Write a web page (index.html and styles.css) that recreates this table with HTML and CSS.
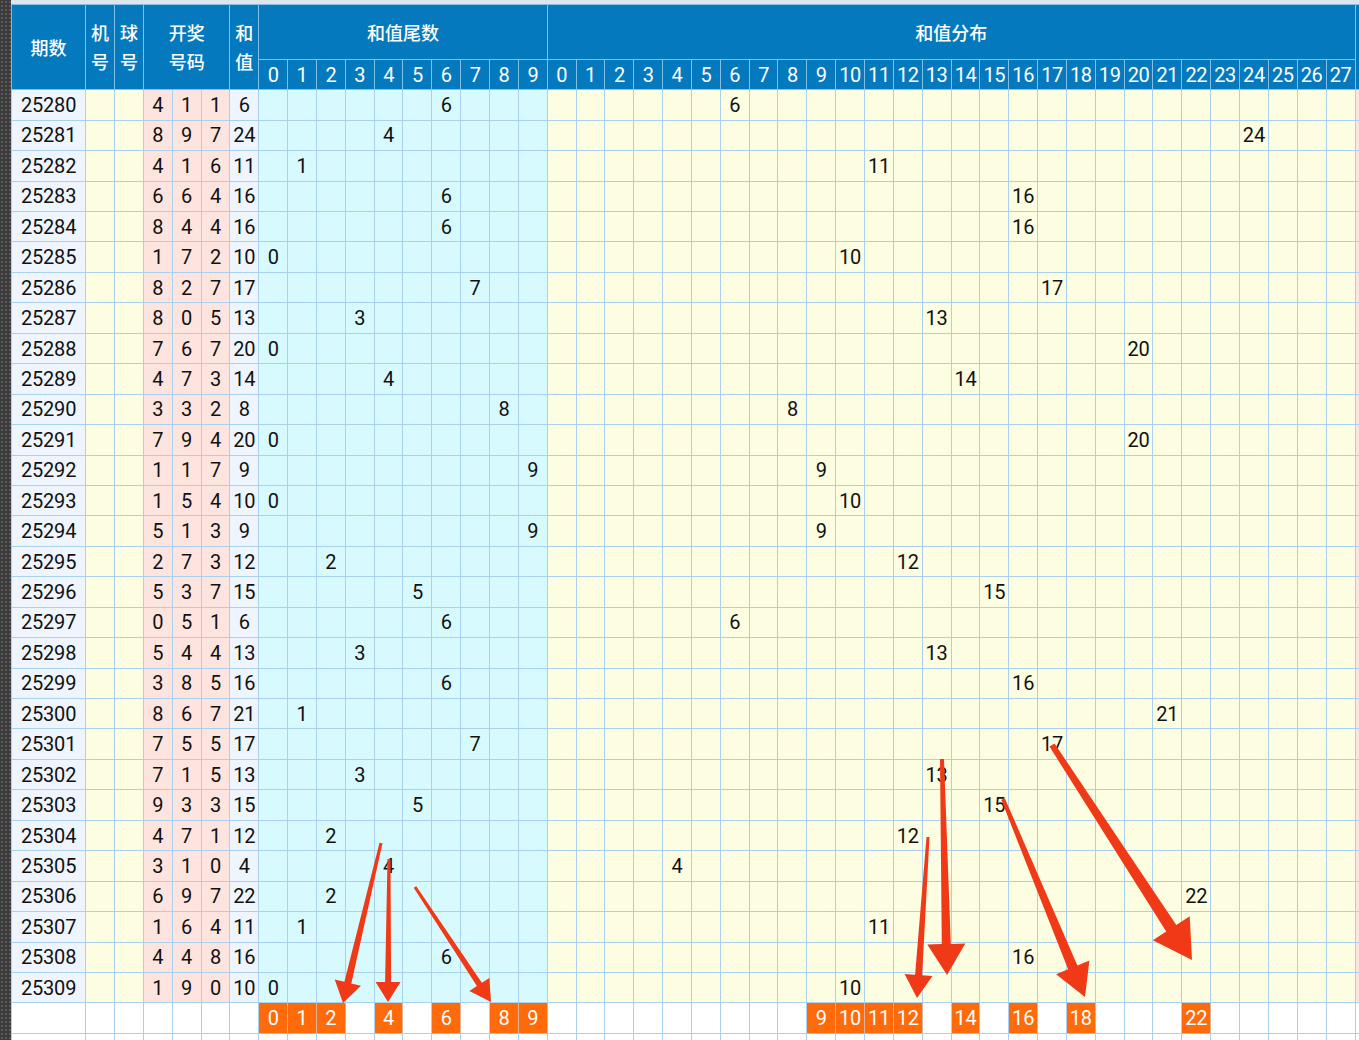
FILE: index.html
```html
<!DOCTYPE html>
<html lang="zh-CN">
<head>
<meta charset="utf-8">
<title>和值走势</title>
<link rel="stylesheet" href="styles.css">
</head>
<body>
<div class="page">
  <div class="rail"></div>
  <div class="sheet">
    <table class="chart">
      <colgroup id="cols"></colgroup>
      <thead>
        <tr class="h1">
          <th rowspan="2" class="cn">期数</th>
          <th rowspan="2" class="cn two">机<br>号</th>
          <th rowspan="2" class="cn two">球<br>号</th>
          <th rowspan="2" colspan="3" class="cn two">开奖<br>号码</th>
          <th rowspan="2" class="cn two">和<br>值</th>
          <th colspan="10" class="cn">和值尾数</th>
          <th colspan="28" class="cn">和值分布</th>
          <th rowspan="2"></th>
        </tr>
        <tr class="h2" id="subhead"></tr>
      </thead>
      <tbody id="rows"></tbody>
    </table>
  </div>
  <svg class="arrows" id="arrows" width="1359" height="1040" viewBox="0 0 1359 1040"></svg>
</div>
<script src="script.js"></script>
</body>
</html>
```
FILE: styles.css
```css
html, body {
  margin: 0;
  padding: 0;
}
body {
  background: #dde6ec;
  overflow: hidden;
  width: 1359px;
  height: 1040px;
}
.page {
  position: relative;
  display: flex;
  width: 1359px;
  height: 1040px;
  overflow: hidden;
}
.rail {
  flex: 0 0 11px;
  background-color: #3b3b3b;
  background-image: radial-gradient(circle, #5a5a5a 0.8px, transparent 1.1px);
  background-size: 4px 4px;
}
.sheet {
  padding-top: 4px;
  flex: 0 0 auto;
}
.chart {
  border-collapse: collapse;
  table-layout: fixed;
  width: 1372.45px;
  font-family: Roboto, "Noto Sans", sans-serif;
  font-size: 20px;
  color: #111;
}
.chart col.wide { width: 74.2px; }
.chart col.narrow { width: 28.85px; }
.chart th {
  background: #0479bd;
  color: #fff;
  font-weight: 400;
  border: 1px solid #82c0e8;
  padding: 0;
  text-align: center;
  vertical-align: middle;
}
.chart th.cn {
  font-family: "Noto Sans CJK SC", "Noto Sans", sans-serif;
  font-size: 18px;
  font-weight: 500;
  line-height: 29px;
}
.chart tr.h1 { height: 55.3px; }
.chart tr.h2 { height: 30px; }
.chart tr.h2 th { font-size: 20px; letter-spacing: -0.4px; }
.chart td {
  border: 1px solid #a9d1ee;
  padding: 0;
  text-align: center;
  vertical-align: middle;
  white-space: nowrap;
  overflow: visible;
  letter-spacing: -0.2px;
}
.chart tbody tr { height: 30.45px; }
.chart td.qi { background: #eef5fe; }
.chart td.jh { background: #fdfde2; }
.chart td.kj { background: #fde4de; }
.chart td.hz { background: #eef5fe; }
.chart td.ws { background: #d7fafe; }
.chart td.fb { background: #fdfde1; }
.chart td.px { background: #fde4de; }
.chart tr.sum td { background: #fff; }
.chart tr.sum td.hit {
  background: #ff6a0a;
  color: #fff;
  border-color: #d9b59c;
}
.chart tr.blank td { background: #fff; }
.arrows {
  position: absolute;
  left: 0;
  top: 0;
  pointer-events: none;
}
.arrows polygon { fill: #f03a17; }
```
FILE: script.js
```js
(function () {
  var data = [
    [25280,4,1,1],[25281,8,9,7],[25282,4,1,6],[25283,6,6,4],[25284,8,4,4],
    [25285,1,7,2],[25286,8,2,7],[25287,8,0,5],[25288,7,6,7],[25289,4,7,3],
    [25290,3,3,2],[25291,7,9,4],[25292,1,1,7],[25293,1,5,4],[25294,5,1,3],
    [25295,2,7,3],[25296,5,3,7],[25297,0,5,1],[25298,5,4,4],[25299,3,8,5],
    [25300,8,6,7],[25301,7,5,5],[25302,7,1,5],[25303,9,3,3],[25304,4,7,1],
    [25305,3,1,0],[25306,6,9,7],[25307,1,6,4],[25308,4,4,8],[25309,1,9,0]
  ];
  var tailHits = [0, 1, 2, 4, 6, 8, 9];
  var sumHits = [9, 10, 11, 12, 14, 16, 18, 22];

  var cols = document.getElementById('cols');
  var c = '<col class="wide">';
  for (var i = 0; i < 45; i++) c += '<col class="narrow">';
  cols.innerHTML = c;

  var sub = '';
  for (i = 0; i < 10; i++) sub += '<th>' + i + '</th>';
  for (i = 0; i < 28; i++) sub += '<th>' + i + '</th>';
  document.getElementById('subhead').innerHTML = sub;

  var html = '';
  data.forEach(function (r) {
    var s = r[1] + r[2] + r[3], t = s % 10;
    var row = '<tr><td class="qi">' + r[0] + '</td><td class="jh"></td><td class="jh"></td>' +
      '<td class="kj">' + r[1] + '</td><td class="kj">' + r[2] + '</td><td class="kj">' + r[3] + '</td>' +
      '<td class="hz">' + s + '</td>';
    for (var k = 0; k < 10; k++) row += '<td class="ws">' + (k === t ? k : '') + '</td>';
    for (k = 0; k < 28; k++) row += '<td class="fb">' + (k === s ? k : '') + '</td>';
    row += '<td class="px"></td></tr>';
    html += row;
  });
  var sumRow = '<tr class="sum"><td></td><td></td><td></td><td></td><td></td><td></td><td></td>';
  for (i = 0; i < 10; i++) sumRow += tailHits.indexOf(i) >= 0 ? '<td class="hit">' + i + '</td>' : '<td></td>';
  for (i = 0; i < 28; i++) sumRow += sumHits.indexOf(i) >= 0 ? '<td class="hit">' + i + '</td>' : '<td></td>';
  sumRow += '<td></td></tr>';
  var blank = '<tr class="blank">';
  for (i = 0; i < 46; i++) blank += '<td></td>';
  blank += '</tr>';
  document.getElementById('rows').innerHTML = html + sumRow + blank;

  // arrows: start, tip, shaft width at start, at head, head length, head width
  var arrows = [
    [381, 843, 343, 1003, 3, 7, 21, 27],
    [389, 859, 388, 1002, 3, 6, 20, 25],
    [415, 887, 491, 1002, 3, 6, 21, 24],
    [928, 837, 917, 998, 3, 7, 23, 28],
    [942, 759, 947, 975, 4, 9, 31, 38],
    [1003, 799, 1085, 997, 4, 10, 32, 36],
    [1052, 745, 1192, 960, 6, 12, 38, 44]
  ];
  var svg = document.getElementById('arrows');
  var out = '';
  arrows.forEach(function (a) {
    var sx = a[0], sy = a[1], tx = a[2], ty = a[3];
    var dx = tx - sx, dy = ty - sy, L = Math.sqrt(dx * dx + dy * dy);
    var ux = dx / L, uy = dy / L, nx = -uy, ny = ux;
    var bx = tx - ux * a[6], by = ty - uy * a[6];
    var p = [
      [sx + nx * a[4] / 2, sy + ny * a[4] / 2],
      [bx + nx * a[5] / 2, by + ny * a[5] / 2],
      [bx + nx * a[7] / 2, by + ny * a[7] / 2],
      [tx, ty],
      [bx - nx * a[7] / 2, by - ny * a[7] / 2],
      [bx - nx * a[5] / 2, by - ny * a[5] / 2],
      [sx - nx * a[4] / 2, sy - ny * a[4] / 2]
    ];
    out += '<polygon points="' + p.map(function (q) { return q[0].toFixed(1) + ',' + q[1].toFixed(1); }).join(' ') + '"/>';
  });
  svg.innerHTML = out;
})();
```
